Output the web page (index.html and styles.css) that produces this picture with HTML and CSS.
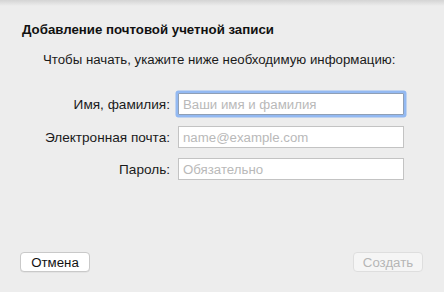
FILE: index.html
```html
<!DOCTYPE html>
<html lang="ru">
<head>
<meta charset="utf-8">
<title>Добавление почтовой учетной записи</title>
<link rel="stylesheet" href="styles.css">
</head>
<body>
<div class="dialog">
  <div class="shade"></div>
  <h1 class="title">Добавление почтовой учетной записи</h1>
  <p class="intro">Чтобы начать, укажите ниже необходимую информацию:</p>
  <form class="form">
    <label class="label" for="name">Имя, фамилия:</label>
    <input class="field focused" id="name" type="text" placeholder="Ваши имя и фамилия">
    <label class="label" for="email">Электронная почта:</label>
    <input class="field" id="email" type="text" placeholder="name@example.com">
    <label class="label" for="pass">Пароль:</label>
    <input class="field" id="pass" type="password" placeholder="Обязательно">
  </form>
  <div class="footer">
    <button class="btn" type="button">Отмена</button>
    <button class="btn disabled" type="button">Создать</button>
  </div>
</div>
</body>
</html>
```
FILE: styles.css
```css
html, body {
  margin: 0;
  padding: 0;
  height: 100%;
}
body {
  background: #ededed;
  font-family: "Liberation Sans", Arial, sans-serif;
  font-size: 13.25px;
  color: #1a1a1a;
}
.dialog {
  height: 292px;
  display: flex;
  flex-direction: column;
  box-sizing: border-box;
  padding: 0 21px 20px 20px;
}
.shade {
  height: 6px;
  margin: 0 -21px 0 -20px;
  background: linear-gradient(#d4d4d4, #ededed);
}
.title {
  margin: 16px 0 0 2px;
  font-size: 13.25px;
  font-weight: bold;
  line-height: 16px;
  color: #111;
}
.intro {
  margin: 14px 0 0 23px;
  line-height: 16px;
}
.form {
  margin-top: 25px;
  display: grid;
  grid-template-columns: 150px 226px;
  column-gap: 8px;
  row-gap: 10px;
  align-items: center;
}
.label {
  text-align: right;
  line-height: 16px;
  padding-top: 2px;
  font-size: 13.6px;
}
.field {
  box-sizing: border-box;
  width: 226px;
  height: 22px;
  margin: 0;
  padding: 0 4px;
  border: 1px solid #c3c3c3;
  border-radius: 0;
  background: #fff;
  font-family: "Liberation Sans", Arial, sans-serif;
  font-size: 13.25px;
  color: #222;
  outline: none;
}
.field::placeholder {
  color: #b9b9b9;
}
.focused {
  border-color: #8f9fb5;
  box-shadow: 0 0 0 2.5px #93b9f2;
  border-radius: 1px;
}
.form .field:nth-of-type(2) {
  margin-top: 1px;
}
.footer {
  margin-top: auto;
  display: flex;
  justify-content: space-between;
}
.btn {
  box-sizing: border-box;
  width: 70px;
  height: 20px;
  padding: 0;
  border: 1px solid #c9c9c9;
  border-radius: 4px;
  background: #fff;
  font-family: "Liberation Sans", Arial, sans-serif;
  font-size: 13.25px;
  color: #111;
  box-shadow: 0 0.5px 0.5px rgba(0,0,0,0.08);
}
.btn.disabled {
  background: #f5f5f5;
  border-color: #dedede;
  color: #b5b5b5;
  box-shadow: none;
}
```
